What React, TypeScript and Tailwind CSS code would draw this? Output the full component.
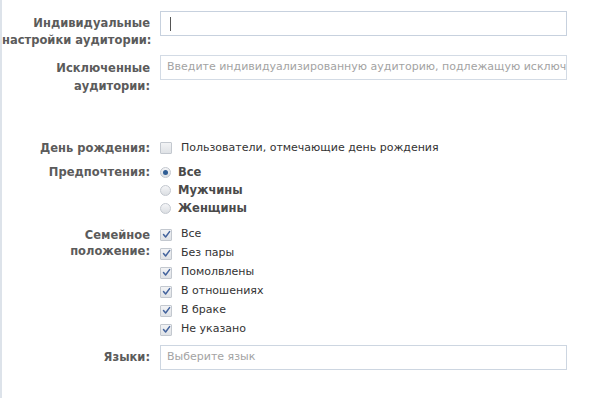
import React from 'react'

const font = { fontFamily: '"DejaVu Sans", Verdana, sans-serif' }

function Checkbox({ checked }: { checked?: boolean }) {
  return (
    <span className="relative flex h-[12px] w-[12px] shrink-0 items-center justify-center rounded-[1px] border border-[#c3c8cf] bg-gradient-to-b from-[#f2f3f5] to-[#dfe2e6]">
      {checked && (
        <svg width="9" height="9" viewBox="0 0 9 9" className="absolute">
          <path d="M1.5 4.6 L3.6 7 L7.6 1.6" fill="none" stroke="#43639d" strokeWidth="1.5" strokeLinecap="round" strokeLinejoin="round" />
        </svg>
      )}
    </span>
  )
}

function Radio({ checked }: { checked?: boolean }) {
  return (
    <span className="flex h-[11px] w-[11px] shrink-0 items-center justify-center rounded-full border border-[#c3c8cf] bg-gradient-to-b from-[#f4f5f7] to-[#dcdfe3]">
      {checked && <span className="h-[5px] w-[5px] rounded-full bg-[#2f5d94]" />}
    </span>
  )
}

function Label({ children, className = '' }: { children: React.ReactNode; className?: string }) {
  return (
    <div className={`w-[148px] shrink-0 whitespace-nowrap text-right text-[11.5px] font-bold text-[#5b5b5b] ${className}`}>
      {children}
    </div>
  )
}

const marital = ['Все', 'Без пары', 'Помолвлены', 'В отношениях', 'В браке', 'Не указано']

export default function App() {
  return (
    <div className="h-[398px] w-[600px] overflow-hidden border-l-2 border-[#dde3ea] bg-white" style={font}>
      <div className="flex flex-col">
        {/* custom audiences */}
        <div className="mt-[11px] flex items-start gap-[10px]">
          <Label className="pt-[4px] leading-[17px]">
            Индивидуальные
            <br />
            настройки аудитории:
          </Label>
          <div className="relative h-[25px] w-[407px] border border-[#c7d1de] bg-white">
            <span className="absolute left-[9px] top-[5px] h-[14px] w-[1px] bg-[#555]" />
          </div>
        </div>

        <div className="mt-[6px] flex items-start gap-[10px]">
          <Label className="pt-[4px] leading-[18px]">
            Исключенные
            <br />
            аудитории:
          </Label>
          <div className="flex h-[25px] w-[407px] items-center overflow-hidden whitespace-nowrap border border-[#d3dbe5] bg-white pl-[6px] text-[11px] text-[#a3a3a3]">
            Введите индивидуализированную аудиторию, подлежащую исключению
          </div>
        </div>

        {/* birthday */}
        <div className="mt-[44px] flex items-center gap-[10px] leading-[18px]">
          <Label>День рождения:</Label>
          <div className="flex items-center gap-[9px] text-[11px] text-[#333]">
            <Checkbox />
            <span>Пользователи, отмечающие день рождения</span>
          </div>
        </div>

        {/* gender */}
        <div className="mt-[6px] flex items-start gap-[10px] leading-[18px]">
          <Label>Предпочтения:</Label>
          <div className="flex flex-col">
            {['Все', 'Мужчины', 'Женщины'].map((g, i) => (
              <div key={g} className="flex h-[18px] items-center gap-[7px] text-[11.5px] font-bold text-[#4a4a4a]">
                <Radio checked={i === 0} />
                <span>{g}</span>
              </div>
            ))}
          </div>
        </div>

        {/* relationship */}
        <div className="mt-[8px] flex items-start gap-[10px]">
          <Label className="pt-[2px] leading-[16px]">
            Семейное
            <br />
            положение:
          </Label>
          <div className="flex flex-col">
            {marital.map((m) => (
              <div key={m} className="flex h-[19px] items-center gap-[9px] text-[11px] text-[#333]">
                <Checkbox checked />
                <span>{m}</span>
              </div>
            ))}
          </div>
        </div>

        {/* languages */}
        <div className="mt-[6px] flex items-start gap-[10px]">
          <Label className="pt-[3px] leading-[18px]">Языки:</Label>
          <div className="flex h-[25px] w-[407px] items-center border border-[#cdd6e1] bg-white pl-[6px] text-[11px] text-[#a3a3a3]">
            Выберите язык
          </div>
        </div>
      </div>
    </div>
  )
}
